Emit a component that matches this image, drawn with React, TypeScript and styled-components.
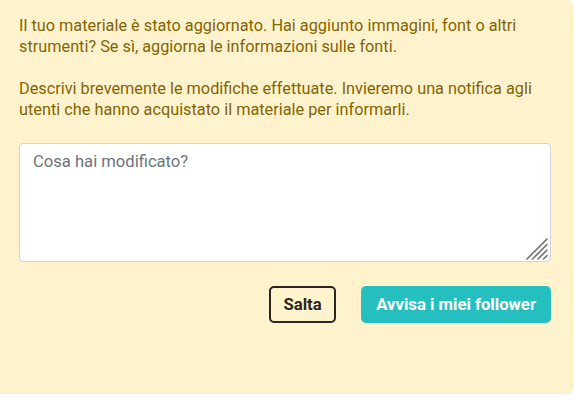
import styled, { createGlobalStyle } from "styled-components";

const GlobalStyle = createGlobalStyle`
  html, body {
    margin: 0;
    padding: 0;
    background: #ffffff;
  }
  body {
    font-family: Roboto, "Liberation Sans", Arial, sans-serif;
  }
`;

const Panel = styled.div`
  box-sizing: border-box;
  width: 573px;
  height: 394px;
  background-color: #fff3cd;
  border: 1px solid #ffeeba;
  border-left: none;
  border-top: none;
  border-radius: 0 6px 6px 0;
  padding: 15px 22px 0 19px;
  color: #856404;
`;

const Text = styled.p`
  margin: 0 0 21px;
  font-size: 16.3px;
  line-height: 21px;
`;

const FieldWrap = styled.div`
  position: relative;
  width: 532px;
  margin-top: 23px;
`;

const NoteField = styled.textarea`
  display: block;
  box-sizing: border-box;
  width: 100%;
  height: 119px;
  margin: 0;
  padding: 6px 13px;
  border: 1px solid #ced4da;
  border-radius: 4px;
  background: #ffffff;
  font-family: Roboto, "Liberation Sans", Arial, sans-serif;
  font-size: 16.6px;
  line-height: 24px;
  color: #495057;
  resize: none;

  &::placeholder {
    color: #6c757d;
  }
`;

const Grip = styled.svg`
  position: absolute;
  right: 3px;
  bottom: 2px;
  width: 22px;
  height: 22px;
  pointer-events: none;
`;

const Actions = styled.div`
  display: flex;
  justify-content: flex-end;
  gap: 25px;
  width: 532px;
  margin-top: 24px;
`;

const Button = styled.button<{ $primary?: boolean }>`
  box-sizing: border-box;
  height: 37px;
  padding: 0 ${(p) => (p.$primary ? "15px" : "12.5px")};
  border-radius: 5px;
  border: ${(p) => (p.$primary ? "none" : "2px solid #2a2522")};
  background: ${(p) => (p.$primary ? "#26bfbf" : "transparent")};
  color: ${(p) => (p.$primary ? "#ffffff" : "#2a2522")};
  font-family: Roboto, "Liberation Sans", Arial, sans-serif;
  font-size: 16.7px;
  font-weight: 700;
  cursor: pointer;
`;

export default function App() {
  return (
    <>
      <GlobalStyle />
      <Panel>
        <Text>
          Il tuo materiale è stato aggiornato. Hai aggiunto immagini, font o altri
          strumenti? Se sì, aggiorna le informazioni sulle fonti.
        </Text>
        <Text>
          Descrivi brevemente le modifiche effettuate. Invieremo una notifica agli
          utenti che hanno acquistato il materiale per informarli.
        </Text>
        <FieldWrap>
          <NoteField placeholder="Cosa hai modificato?" />
          <Grip viewBox="0 0 22 22">
            <g stroke="#6f6f6f" strokeWidth="1.6" strokeLinecap="round">
              <line x1="21" y1="1" x2="1" y2="21" />
              <line x1="21" y1="6.5" x2="6.5" y2="21" />
              <line x1="21" y1="12" x2="12" y2="21" />
              <line x1="21" y1="17.5" x2="17.5" y2="21" />
            </g>
          </Grip>
        </FieldWrap>
        <Actions>
          <Button>Salta</Button>
          <Button $primary>Avvisa i miei follower</Button>
        </Actions>
      </Panel>
    </>
  );
}
